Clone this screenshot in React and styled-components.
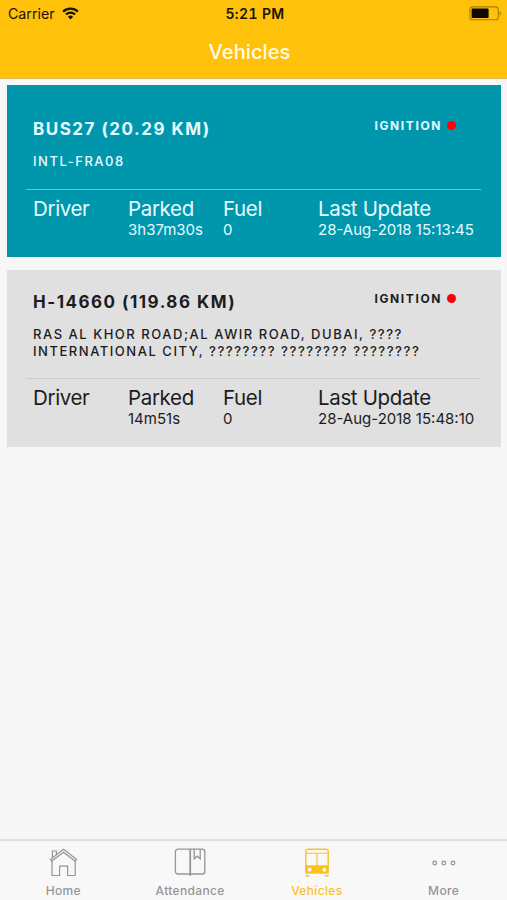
import styled, { createGlobalStyle } from "styled-components";

const vehicles = [
  {
    name: "BUS27 (20.29 KM)",
    location: ["INTL-FRA08"],
    parked: "3h37m30s",
    fuel: "0",
    updated: "28-Aug-2018 15:13:45",
    active: true,
  },
  {
    name: "H-14660 (119.86 KM)",
    location: [
      "RAS AL KHOR ROAD;AL AWIR ROAD, DUBAI, ????",
      "INTERNATIONAL CITY, ???????? ???????? ????????",
    ],
    parked: "14m51s",
    fuel: "0",
    updated: "28-Aug-2018 15:48:10",
    active: false,
  },
];

const tabs = [
  { label: "Home", Icon: HomeIcon },
  { label: "Attendance", Icon: BookIcon },
  { label: "Vehicles", Icon: BusIcon, selected: true },
  { label: "More", Icon: MoreIcon },
];

export default function App() {
  return (
    <Screen>
      <GlobalStyle />
      <Header>
        <StatusBar>
          <Carrier>
            Carrier
            <WifiIcon />
          </Carrier>
          <Clock>5:21 PM</Clock>
          <BatteryWrap>
            <BatteryIcon />
          </BatteryWrap>
        </StatusBar>
        <Title>Vehicles</Title>
      </Header>
      <List>
        {vehicles.map((vehicle) => (
          <VehicleCard key={vehicle.name} vehicle={vehicle} />
        ))}
      </List>
      <TabBar>
        {tabs.map(({ label, Icon, selected }) => (
          <Tab key={label} href="#" $selected={selected}>
            <Icon />
            <TabLabel>{label}</TabLabel>
          </Tab>
        ))}
      </TabBar>
    </Screen>
  );
}

function VehicleCard({ vehicle }) {
  return (
    <Card $active={vehicle.active}>
      <CardTop>
        <Name>{vehicle.name}</Name>
        <Ignition>
          IGNITION
          <Dot />
        </Ignition>
      </CardTop>
      <Location>
        {vehicle.location.map((line) => (
          <div key={line}>{line}</div>
        ))}
      </Location>
      <Details $active={vehicle.active}>
        <Detail label="Driver" />
        <Detail label="Parked" value={vehicle.parked} />
        <Detail label="Fuel" value={vehicle.fuel} />
        <Detail label="Last Update" value={vehicle.updated} />
      </Details>
    </Card>
  );
}

function Detail({ label, value }) {
  return (
    <div>
      <DetailLabel>{label}</DetailLabel>
      <DetailValue>{value}</DetailValue>
    </div>
  );
}

function WifiIcon() {
  return (
    <svg width="17" height="13" viewBox="0 0 17 13" fill="none" stroke="#1a1400">
      <path d="M1.1 4.6a10.6 10.6 0 0 1 14.8 0" strokeWidth="2.2" />
      <path d="M3.9 7.5a6.6 6.6 0 0 1 9.2 0" strokeWidth="2.1" />
      <path d="M8.5 12.4 5.9 9.7a3.8 3.8 0 0 1 5.2 0z" fill="#1a1400" stroke="none" />
    </svg>
  );
}

function BatteryIcon() {
  return (
    <svg width="33" height="15" viewBox="0 0 33 15">
      <rect x="0.9" y="0.9" width="28.4" height="12.8" rx="2.8" fill="none" stroke="#a98003" strokeWidth="1.1" />
      <rect x="2.6" y="2.6" width="17" height="9.4" rx="0.8" fill="#0c0900" />
      <path d="M30.6 5.2a2.4 2.4 0 0 1 0 4.4z" fill="#a98003" />
    </svg>
  );
}

function HomeIcon() {
  return (
    <svg width="28" height="30" viewBox="0 0 28 30" fill="none" stroke="currentColor" strokeWidth="1.2">
      <path d="M1.4 11.4 14.5 1.3l13 10.1-1.3 1.7L14.5 4.2 2.7 13.1z" />
      <path d="M3.4 9.4V3h4v3.4" />
      <path d="M3 13.1v14.4h7.6v-9.3h8v9.3h7.6V13.1" />
    </svg>
  );
}

function BookIcon() {
  return (
    <svg width="32" height="30" viewBox="0 0 32 30" fill="none" stroke="currentColor" strokeWidth="1.3">
      <rect x="1.4" y="1.2" width="29.4" height="24.8" rx="2.6" />
      <path d="M16.2 1.2v26.6" strokeWidth="1.8" />
      <path d="M20.2 1.2v9.6l3-2.6 3 2.6V1.2" />
    </svg>
  );
}

function BusIcon() {
  return (
    <svg width="26" height="30" viewBox="0 0 26 30" fill="none" stroke="currentColor">
      <path d="M1.8 18V3.2a2 2 0 0 1 2-2h18.4a2 2 0 0 1 2 2V18" strokeWidth="1.4" />
      <path d="M2 5.2h22M13 5.2V18" strokeWidth="1.1" />
      <path
        d="M1.1 17.2h23.8v8.6H1.1zM5.6 19.7a2 2 0 1 0 0 4 2 2 0 0 0 0-4zm14.8 0a2 2 0 1 0 0 4 2 2 0 0 0 0-4z"
        fill="currentColor"
        fillRule="evenodd"
        stroke="none"
      />
      <path d="M1.4 27.8h4M20.6 27.8h4" strokeWidth="1.4" />
    </svg>
  );
}

function MoreIcon() {
  return (
    <svg width="26" height="30" viewBox="0 0 26 30" fill="none" stroke="currentColor" strokeWidth="1.2">
      <circle cx="3.7" cy="15" r="1.8" />
      <circle cx="12.8" cy="15" r="1.8" />
      <circle cx="22" cy="15" r="1.8" />
    </svg>
  );
}

const GlobalStyle = createGlobalStyle`
  body {
    margin: 0;
    background: #f7f7f7;
    font-family: Inter, "Liberation Sans", sans-serif;
  }
`;

const Screen = styled.div`
  display: flex;
  flex-direction: column;
  height: 100vh;
  background: #f7f7f7;
`;

const Header = styled.header`
  height: 79px;
  box-sizing: border-box;
  background: #ffc10a;
  border-bottom: 1px solid #d9b75b;
`;

const StatusBar = styled.div`
  display: grid;
  grid-template-columns: 1fr auto 1fr;
  align-items: center;
  height: 27px;
  padding: 0 5px 0 8px;
  color: #1a1400;
`;

const Carrier = styled.div`
  display: flex;
  align-items: center;
  gap: 7px;
  font-size: 14.2px;
`;

const Clock = styled.div`
  font-size: 14px;
  font-weight: 600;
  font-variant-numeric: tabular-nums;
  letter-spacing: 0.35px;
`;

const BatteryWrap = styled.div`
  display: flex;
  justify-content: flex-end;
`;

const Title = styled.h1`
  margin: 0;
  padding-right: 8px;
  font-size: 20.2px;
  font-weight: 500;
  line-height: 50px;
  text-align: center;
  color: #fffbe8;
`;

const List = styled.main`
  flex: 1;
  display: flex;
  flex-direction: column;
  gap: 13px;
  padding: 6px 6px 0 7px;
`;

const Card = styled.section`
  padding: ${({ $active }) => ($active ? "30.4px" : "18px")} 20px 19.15px 19px;
  background: ${({ $active }) => ($active ? "#0097ad" : "#e0e0e0")};
  color: ${({ $active }) => ($active ? "#e6fbff" : "#1c1c1c")};
`;

const CardTop = styled.div`
  display: flex;
  justify-content: space-between;
  padding: 0 25px 0 7px;
`;

const Name = styled.h2`
  margin: 0;
  font-size: 17px;
  font-weight: 700;
  line-height: 28px;
  letter-spacing: 1.5px;
`;

const Ignition = styled.div`
  display: flex;
  align-items: center;
  height: 21px;
  gap: 5px;
  font-size: 12px;
  font-weight: 700;
  letter-spacing: 1.6px;
`;

const Dot = styled.span`
  width: 9px;
  height: 9px;
  border-radius: 50%;
  background: #ff0008;
`;

const Location = styled.div`
  padding: 10px 7px 18.45px;
  font-size: 13px;
  font-weight: 500;
  line-height: 17px;
  letter-spacing: 1.53px;
  white-space: nowrap;
`;

const Details = styled.div`
  display: grid;
  grid-template-columns: 95px 95px 95px 1fr;
  padding: 6px 0 0 7px;
  border-top: 1px solid ${({ $active }) => ($active ? "#6fc0cb" : "#cbcbcb")};
`;

const DetailLabel = styled.div`
  font-size: 20.5px;
  line-height: 26px;
  letter-spacing: -0.35px;
`;

const DetailValue = styled.div`
  font-size: 15px;
  line-height: 16px;
  white-space: nowrap;
`;

const TabBar = styled.nav`
  display: grid;
  grid-template-columns: repeat(4, 1fr);
  height: 61px;
  box-sizing: border-box;
  border-top: 2px solid #dfdfdf;
  background: #f8f8f8;
`;

const Tab = styled.a`
  display: flex;
  flex-direction: column;
  align-items: center;
  padding-top: 7px;
  text-decoration: none;
  color: ${({ $selected }) => ($selected ? "#fcc21c" : "#959595")};
`;

const TabLabel = styled.span`
  font-size: 12px;
  font-weight: 500;
  line-height: 26px;
  letter-spacing: 0.35px;
`;
